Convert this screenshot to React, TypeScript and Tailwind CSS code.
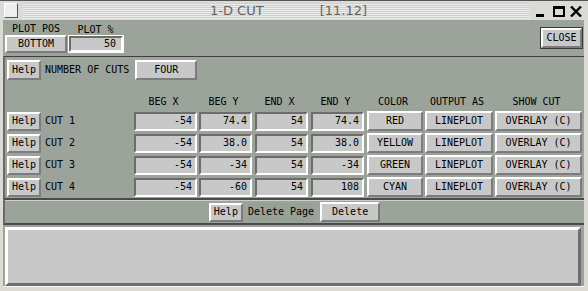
import React from 'react'

const mono = { fontFamily: '"DejaVu Sans Mono", "Liberation Mono", monospace' }

const raised =
  'border-2 border-t-white border-l-white border-b-[#7c7c7c] border-r-[#7c7c7c] bg-[#c8c8c8] flex items-center justify-center text-black'
const sunken =
  'border-2 border-t-[#6c6c6c] border-l-[#6c6c6c] border-b-white border-r-white bg-[#c8c8c8] flex items-center justify-end pr-[3px] text-black'

const cols = [
  { key: 'bx', label: 'BEG X', w: 'w-[63px]', ml: 'ml-0' },
  { key: 'by', label: 'BEG Y', w: 'w-[53px]', ml: 'ml-[2px]' },
  { key: 'ex', label: 'END X', w: 'w-[53px]', ml: 'ml-[3px]' },
  { key: 'ey', label: 'END Y', w: 'w-[53px]', ml: 'ml-[3px]' },
  { key: 'color', label: 'COLOR', w: 'w-[56px]', ml: 'ml-[3px]' },
  { key: 'out', label: 'OUTPUT AS', w: 'w-[68px]', ml: 'ml-[2px]' },
  { key: 'show', label: 'SHOW CUT', w: 'w-[87px]', ml: 'ml-[2px]' },
]

const cuts = [
  { name: 'CUT 1', bx: '-54', by: '74.4', ex: '54', ey: '74.4', color: 'RED' },
  { name: 'CUT 2', bx: '-54', by: '38.0', ex: '54', ey: '38.0', color: 'YELLOW' },
  { name: 'CUT 3', bx: '-54', by: '-34', ex: '54', ey: '-34', color: 'GREEN' },
  { name: 'CUT 4', bx: '-54', by: '-60', ex: '54', ey: '108', color: 'CYAN' },
]

function HelpButton() {
  return <div className={`${raised} w-[34px] h-[19px]`}>Help</div>
}

function TitleBar() {
  return (
    <div className="h-[20px] flex items-center bg-[#dcdad5] border-t border-[#555]">
      <div className="ml-[4px] w-[14px] h-[15px] border border-t-white border-l-white border-b-[#555] border-r-[#555] bg-[#eeeeee]" />
      <div className="ml-[4px] w-[508px] h-[16px] flex items-center bg-[repeating-linear-gradient(180deg,#cfcfcf_0px,#cfcfcf_1px,#ebebeb_1px,#ebebeb_2px)]">
        <span className="ml-[188px] text-[13px] text-[#666]" style={{ fontFamily: '"DejaVu Sans", sans-serif' }}>
          1-D CUT
        </span>
        <span className="ml-[56px] text-[13px] text-[#666]" style={{ fontFamily: '"DejaVu Sans", sans-serif' }}>
          [11.12]
        </span>
      </div>
      <div className="ml-[6px] flex items-end h-[16px]">
        <div className="w-[8px] h-[3px] bg-black mb-[2px]" />
        <div className="ml-[9px] w-[12px] h-[11px] border-2 border-black border-t-[3px] mb-[2px]" />
        <svg className="ml-[5px] mb-[2px]" width="12" height="11" viewBox="0 0 12 11">
          <path d="M1 0.5 L11 10.5 M11 0.5 L1 10.5" stroke="black" strokeWidth="2.4" />
        </svg>
      </div>
    </div>
  )
}

export default function App() {
  return (
    <div className="w-[588px] h-[291px] overflow-hidden bg-[#dcdad5] text-[10px] leading-none" style={mono}>
      <TitleBar />
      <div className="ml-[3px] mr-[4px] h-[266px] bg-[#9ba39a] flex flex-col">
        {/* plot settings */}
        <div className="h-[36px] flex">
          <div className="flex flex-col pl-[2px]">
            <div className="h-[15px] flex items-center justify-center pt-[2px] w-[62px]">PLOT POS</div>
            <div className={`${raised} w-[62px] h-[18px]`}>BOTTOM</div>
          </div>
          <div className="flex flex-col ml-[1px]">
            <div className="h-[15px] flex items-center justify-center pt-[4px] w-[55px]">PLOT %</div>
            <div className="border border-white w-[56px] h-[18px] flex">
              <div className={`${sunken} flex-1 pr-[5px]`}>50</div>
            </div>
          </div>
          <div className="ml-auto mr-[1px] mt-[7px] border border-[#3a3a3a] h-[22px] w-[43px] flex">
            <div className={`${raised} flex-1`}>CLOSE</div>
          </div>
        </div>

        {/* cuts table */}
        <div className="h-[142px] border-t border-[#3f3f3f] border-l-2 border-l-[#6a6a6a] flex flex-col">
          <div className="h-[23px] flex items-center pl-[2px] pt-[2px]">
            <div className={`${raised} w-[34px] h-[20px]`}>Help</div>
            <span className="ml-[4px]">NUMBER OF CUTS</span>
            <div className={`${raised} ml-[6px] w-[62px] h-[20px]`}>FOUR</div>
          </div>
          <div className="h-[30px] flex items-end pb-[3px] pl-[127px]">
            {cols.map(c => (
              <div key={c.key} className={`${c.w} ${c.ml} text-center`}>{c.label}</div>
            ))}
          </div>
          {cuts.map(cut => (
            <div key={cut.name} className="h-[22px] flex items-center pl-[2px]">
              <HelpButton />
              <span className="ml-[4px] w-[89px]">{cut.name}</span>
              <div className={`${sunken} w-[63px] h-[19px]`}>{cut.bx}</div>
              <div className={`${sunken} w-[53px] h-[19px] ml-[2px]`}>{cut.by}</div>
              <div className={`${sunken} w-[53px] h-[19px] ml-[3px]`}>{cut.ex}</div>
              <div className={`${sunken} w-[53px] h-[19px] ml-[3px]`}>{cut.ey}</div>
              <div className={`${raised} w-[56px] h-[20px] ml-[3px]`}>{cut.color}</div>
              <div className={`${raised} w-[68px] h-[20px] ml-[2px]`}>LINEPLOT</div>
              <div className={`${raised} w-[87px] h-[20px] ml-[2px]`}>OVERLAY (C)</div>
            </div>
          ))}
        </div>

        {/* delete page strip */}
        <div className="h-[27px] border-t-2 border-t-[#4a4a4a] border-b-2 border-b-[#4a4a4a] border-l-2 border-l-[#6a6a6a] flex items-center justify-center">
          <div className="border-t border-t-[#c8d0c8] w-full h-full flex items-center justify-center">
            <HelpButton />
            <span className="ml-[5px] bg-[#98a098] h-[19px] flex items-center">Delete Page</span>
            <div className={`${raised} ml-[6px] w-[60px] h-[20px]`}>Delete</div>
          </div>
        </div>

        {/* text area */}
        <div className="mt-[2px] ml-[2px] mr-[3px] h-[59px] border-[3px] border-t-white border-l-white border-b-[#6e6e6e] border-r-[#6e6e6e] bg-[#c8c8c8]" />
      </div>
      <div className="h-[5px] border-t border-[#f5f5f5] mx-[3px]" />
    </div>
  )
}
